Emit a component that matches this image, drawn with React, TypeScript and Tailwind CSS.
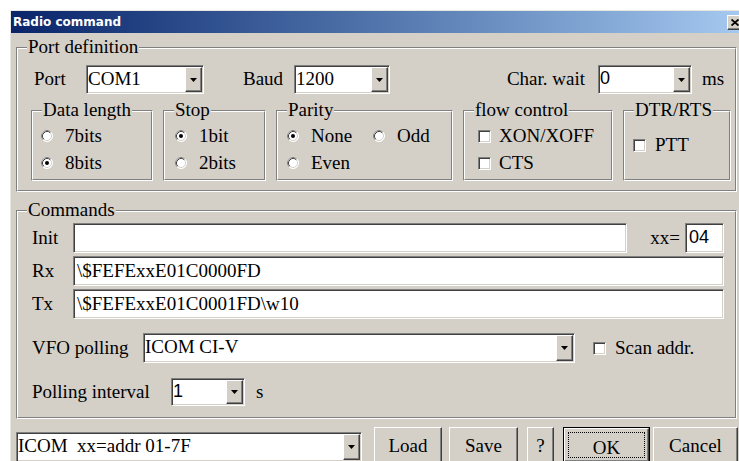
import type { ReactNode } from "react";

const raised =
  "border border-t-white border-l-white border-r-[#404040] border-b-[#404040] shadow-[inset_-1px_-1px_0_#808080]";
const sunken =
  "border border-t-[#808080] border-l-[#808080] border-r-white border-b-white shadow-[inset_1px_1px_0_#404040,inset_-1px_-1px_0_#d4d0c8]";
const sansText = "font-[family-name:Liberation_Sans] text-[18px]";

function Arrow() {
  return (
    <svg width="7" height="4" viewBox="0 0 7 4">
      <polygon points="0,0 7,0 3.5,4" fill="#000" />
    </svg>
  );
}

function Combo({
  value,
  className,
  sans,
}: {
  value: string;
  className: string;
  sans?: boolean;
}) {
  return (
    <div className={`${sunken} flex bg-white ${className}`}>
      <div
        className={`flex-1 pl-[1px] leading-[25px] whitespace-pre overflow-hidden ${sans ? sansText : ""}`}
      >
        {value}
      </div>
      <div className={`${raised} w-[17px] m-[1px] bg-[#d4d0c8] flex items-center justify-center`}>
        <Arrow />
      </div>
    </div>
  );
}

function Field({ value, className, sans }: { value: string; className: string; sans?: boolean }) {
  return (
    <div
      className={`${sunken} bg-white pl-[3px] leading-[27px] whitespace-nowrap ${sans ? sansText : ""} ${className}`}
    >
      {value}
    </div>
  );
}

function Radio({ on }: { on?: boolean }) {
  return (
    <svg width="12" height="12" viewBox="0 0 12 12" className="shrink-0">
      <circle cx="6" cy="6" r="5.5" fill="#fff" stroke="#fff" />
      <path d="M2.11 9.89 A5.5 5.5 0 0 1 9.89 2.11" fill="none" stroke="#808080" />
      <path d="M2.82 9.18 A4.5 4.5 0 0 1 9.18 2.82" fill="none" stroke="#404040" />
      <path d="M9.18 2.82 A4.5 4.5 0 0 1 2.82 9.18" fill="none" stroke="#d4d0c8" />
      {on && <circle cx="6" cy="6" r="2" fill="#000" />}
    </svg>
  );
}

function Check() {
  return <div className={`${sunken} w-[13px] h-[13px] bg-white shrink-0`} />;
}

function Option({ label, on }: { label: string; on?: boolean }) {
  return (
    <div className="flex items-center gap-[12px] h-[22px]">
      <Radio on={on} />
      <span>{label}</span>
    </div>
  );
}

function Tick({ label, gap = "gap-[8px]" }: { label: string; gap?: string }) {
  return (
    <div className={`flex items-center ${gap} h-[22px]`}>
      <Check />
      <span>{label}</span>
    </div>
  );
}

function Group({
  label,
  className,
  children,
}: {
  label: string;
  className: string;
  children: ReactNode;
}) {
  return (
    <div
      className={`relative border border-t-[#808080] border-l-[#808080] border-r-white border-b-white ${className}`}
    >
      <div className="h-full border border-t-white border-l-white border-r-[#808080] border-b-[#808080]">
        {children}
      </div>
      <span className="absolute top-[-12px] left-[10px] px-[1px] bg-[#d4d0c8] leading-[22px]">
        {label}
      </span>
    </div>
  );
}

function Button({ label, className }: { label: string; className: string }) {
  return (
    <div className={`${raised} h-[36px] flex justify-center pt-[4px] ${className}`}>{label}</div>
  );
}

export default function App() {
  return (
    <div className="w-[739px] h-[461px] overflow-hidden bg-white pl-[10px] pt-[10px] font-[family-name:Liberation_Serif] text-[19px] text-black">
      <div className="w-[736px] h-[470px] bg-[#d4d0c8] border-l border-t border-[#e8e6e1]">
        {/* caption */}
        <div className="h-[22px] flex items-center justify-between bg-gradient-to-r from-[#0a246a] to-[#a6caf0]">
          <span className="pl-[2px] font-[family-name:DejaVu_Sans] font-bold text-[12px] text-white">
            Radio command
          </span>
          <div className={`${raised} w-[16px] h-[15px] mr-[3px] bg-[#d4d0c8] flex items-center justify-center`}>
            <svg width="8" height="7" viewBox="0 0 8 7">
              <path d="M0.5 0.5 L7.5 6.5 M7.5 0.5 L0.5 6.5" stroke="#000" strokeWidth="1.8" />
            </svg>
          </div>
        </div>

        <div className="pl-[5px]">
          {/* port setup */}
          <Group label="Port definition" className="mt-[14px] w-[721px] h-[145px]">
            <div className="pt-[16px] flex items-center h-[45px]">
              <span className="w-[68px] pl-[16px]">Port</span>
              <Combo value="COM1" className="w-[118px] h-[29px]" />
              <span className="w-[90px] pl-[39px]">Baud</span>
              <Combo value="1200" className="w-[96px] h-[29px]" />
              <span className="flex-1 text-right pr-[13px]">Char. wait</span>
              <Combo value="0" sans className="w-[94px] h-[29px]" />
              <span className="w-[43px] pl-[10px] pr-[10px]">ms</span>
            </div>
            <div className="mt-[16px] pl-[13px] flex gap-[10px]">
              <Group label="Data length" className="w-[122px] h-[71px]">
                <div className="pl-[8px] pt-[13px] flex flex-col gap-[5px]">
                  <Option label="7bits" />
                  <Option label="8bits" on />
                </div>
              </Group>
              <Group label="Stop" className="w-[103px] h-[71px]">
                <div className="pl-[10px] pt-[13px] flex flex-col gap-[5px]">
                  <Option label="1bit" on />
                  <Option label="2bits" />
                </div>
              </Group>
              <Group label="Parity" className="w-[177px] h-[71px]">
                <div className="pl-[9px] pt-[13px] grid grid-cols-[86px_auto] gap-y-[5px]">
                  <Option label="None" on />
                  <Option label="Odd" />
                  <Option label="Even" />
                </div>
              </Group>
              <Group label="flow control" className="w-[150px] h-[71px]">
                <div className="pl-[13px] pt-[13px] flex flex-col gap-[5px]">
                  <Tick label="XON/XOFF" />
                  <Tick label="CTS" />
                </div>
              </Group>
              <Group label="DTR/RTS" className="w-[108px] h-[71px]">
                <div className="h-full pl-[8px] flex items-center">
                  <Tick label="PTT" gap="gap-[9px]" />
                </div>
              </Group>
            </div>
          </Group>

          {/* command strings */}
          <Group label="Commands" className="mt-[18px] w-[721px] h-[209px]">
            <div className="pt-[11px] pl-[14px] pr-[11px] flex flex-col gap-[3px]">
              <div className="flex items-center h-[30px]">
                <span className="w-[41px]">Init</span>
                <Field value="" className="flex-1 h-[30px]" />
                <span className="w-[58px] text-right pr-[5px]">xx=</span>
                <Field value="04" sans className="w-[39px] h-[30px]" />
              </div>
              <div className="flex items-center h-[30px]">
                <span className="w-[41px]">Rx</span>
                <Field value="\$FEFExxE01C0000FD" className="flex-1 h-[30px]" />
              </div>
              <div className="flex items-center h-[30px]">
                <span className="w-[41px]">Tx</span>
                <Field value="\$FEFExxE01C0001FD\w10" className="flex-1 h-[30px]" />
              </div>
            </div>
            <div className="mt-[14px] pl-[14px] flex items-center h-[30px]">
              <span className="w-[111px]">VFO polling</span>
              <Combo value="ICOM CI-V" className="w-[432px] h-[30px]" />
              <div className="ml-[18px]">
                <Tick label="Scan addr." gap="gap-[9px]" />
              </div>
            </div>
            <div className="mt-[15px] pl-[14px] flex items-center h-[28px]">
              <span className="w-[139px]">Polling interval</span>
              <Combo value="1" sans className="w-[74px] h-[28px]" />
              <span className="ml-[11px]">s</span>
            </div>
          </Group>

          {/* profile and dialog buttons */}
          <div className="mt-[8px] flex items-start">
            <Combo value="ICOM  xx=addr 01-7F" className="mt-[5px] w-[346px] h-[30px]" />
            <Button label="Load" className="ml-[12px] w-[68px]" />
            <Button label="Save" className="ml-[7px] w-[69px]" />
            <Button label="?" className="ml-[9px] w-[27px]" />
            <div className="ml-[9px] w-[87px] h-[36px] border border-black">
              <div className={`${raised} h-full p-[3px]`}>
                <div className="h-full border border-dotted border-black flex justify-center pt-[1px]">
                  OK
                </div>
              </div>
            </div>
            <Button label="Cancel" className="ml-[3px] w-[85px]" />
          </div>
        </div>
      </div>
    </div>
  );
}
